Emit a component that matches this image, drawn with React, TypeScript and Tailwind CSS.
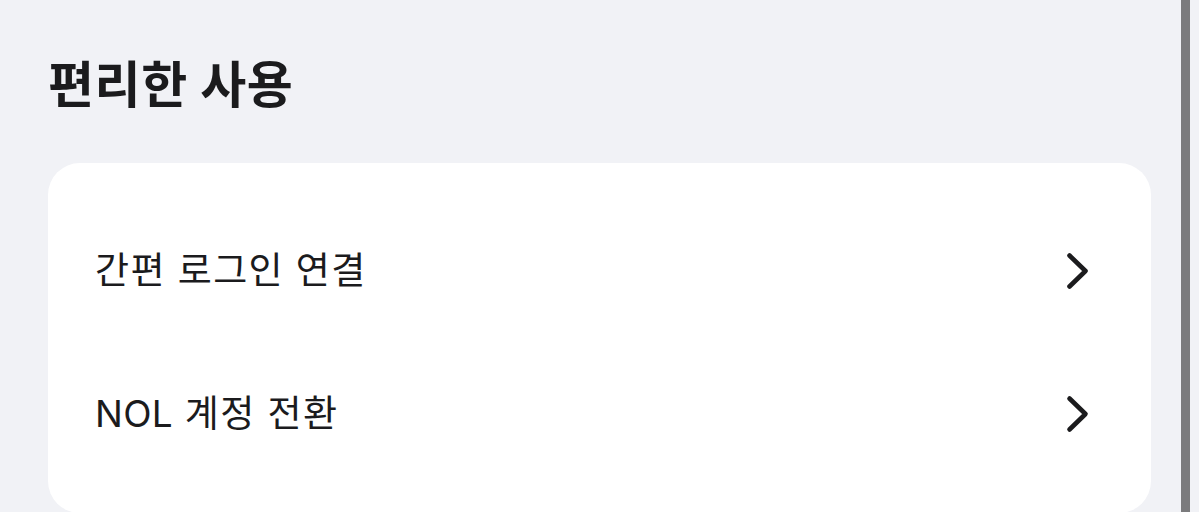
import { ReactNode } from "react";

function Chevron() {
    return (
        <svg width="24" height="38" viewBox="0 0 24 38" fill="none" aria-hidden="true">
            <path d="M3.5 3.5 L19.5 19 L3.5 34.5" stroke="#1b1b1d" strokeWidth={4.6} strokeLinecap="round" strokeLinejoin="round" />
        </svg>
    );
}

function MenuRow({ children }: { children: ReactNode }) {
    return (
        <div className="flex h-[143px] items-center justify-between pl-[47px] pr-[61px]">
            <span className="text-[37px] leading-none tracking-[1.4px] text-[#1b1b1d]">{children}</span>
            <Chevron />
        </div>
    );
}

export default function App() {
    return (
        <div
            className="flex h-[512px] w-[1199px] overflow-hidden bg-[#f1f2f6]"
            style={{ fontFamily: '"Inter", "Noto Sans CJK KR", sans-serif' }}
        >
            <div className="flex w-[1181px] flex-col px-[48px] pt-[60px]">
                {/* section title */}
                <h2 className="text-[50px] font-bold leading-none tracking-[0.6px] text-[#1b1b1d]">편리한 사용</h2>
                <div className="mt-[53px] w-[1103px] shrink-0 rounded-[32px] bg-white pt-[36px] pb-[28px]">
                    <MenuRow>간편 로그인 연결</MenuRow>
                    <MenuRow>
                        <span className="tracking-[0.3px]">NOL</span> 계정 전환
                    </MenuRow>
                </div>
            </div>
            <div className="h-full w-[9px] bg-[#7b7b7d]" />
            <div className="h-full flex-1" />
        </div>
    );
}
